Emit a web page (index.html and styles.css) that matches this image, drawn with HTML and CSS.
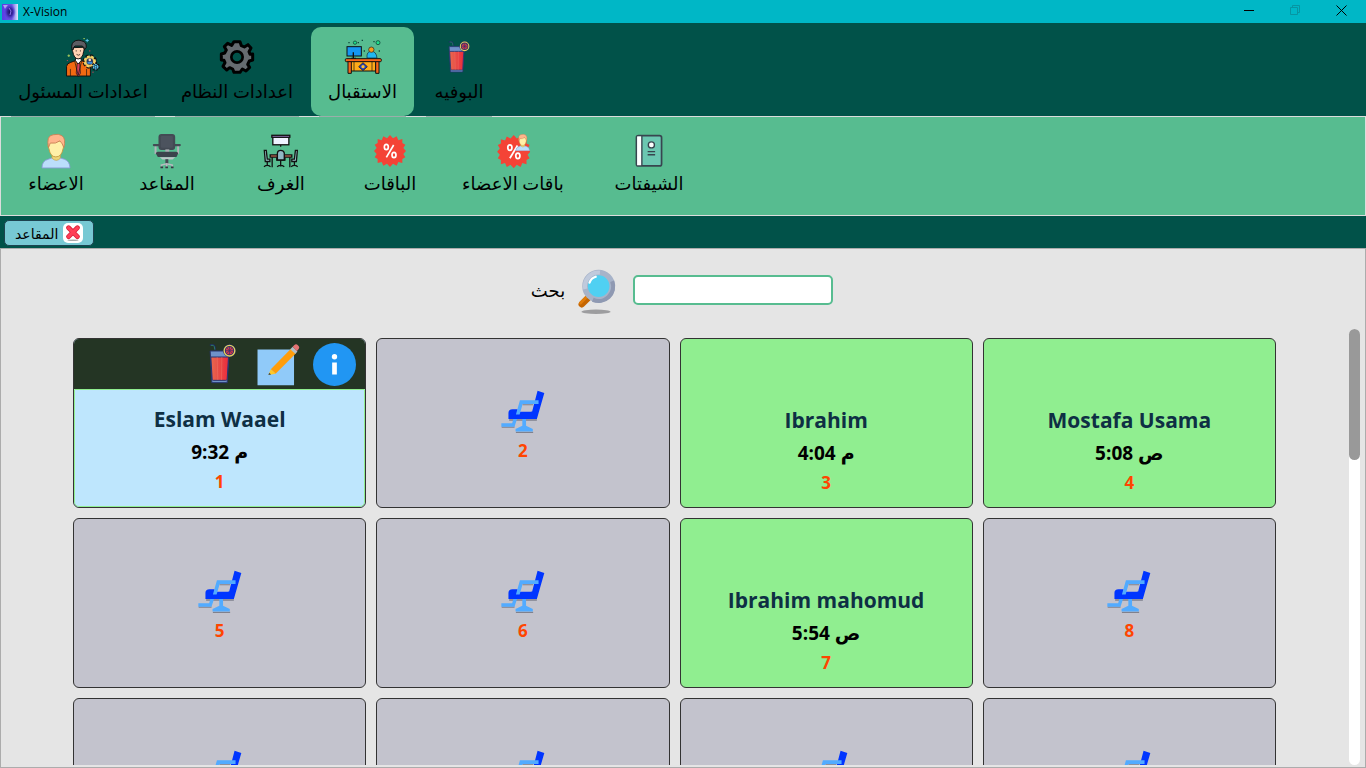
FILE: index.html
```html
<!DOCTYPE html>
<html lang="ar">
<head>
<meta charset="utf-8">
<meta name="viewport" content="width=device-width, initial-scale=1">
<title>X-Vision</title>
<link rel="stylesheet" href="styles.css">
</head>
<body>
<svg class="defs" aria-hidden="true">
  <defs>
    <linearGradient id="juice-fill" x1="0" x2="1"><stop offset="0" stop-color="#e8694f"/><stop offset="1" stop-color="#ea2a3c"/></linearGradient>
    <radialGradient id="logo-fill"><stop offset="0" stop-color="#1a1060"/><stop offset=".5" stop-color="#3a28a8"/><stop offset="1" stop-color="#5a45e0" stop-opacity="0"/></radialGradient>
    <linearGradient id="logo-edge" x1="0" x2="1"><stop offset="0" stop-color="#5a3be8"/><stop offset=".6" stop-color="#6a58e0"/><stop offset="1" stop-color="#dfe8ff"/></linearGradient>
  </defs>
  <symbol id="juice" viewBox="444 60 86 120">
    <path d="M449 63h10q5 1 6 14" fill="none" stroke="#1f2b6b" stroke-width="5"/>
    <path d="M452 64h7q4 1 5 13" fill="none" stroke="#2f8a63" stroke-width="2.5"/>
    <path d="M450 81h57l-6 95h-46z" fill="#6f92c9" stroke="#27346f" stroke-width="3"/>
    <path d="M452 99h53l-4 67q-1 3-4 3h-38q-3 0-3-3z" fill="url(#juice-fill)" stroke="#27346f" stroke-width="3"/>
    <path d="M471 99l2 69M485 99l-1 69" stroke="#f08070" stroke-width="2" opacity=".6"/>
    <circle cx="508" cy="80" r="18" fill="#35306a" stroke="#26305f" stroke-width="3"/>
    <circle cx="508" cy="80" r="16" fill="none" stroke="#e4d25c" stroke-width="4"/>
    <circle cx="508" cy="80" r="11" fill="#d43b4c"/>
    <path d="M508 69v22M497 80h22M500 72l16 16M516 72l-16 16" stroke="#35306a" stroke-width="2"/>
  </symbol>
  <symbol id="manager" viewBox="198 108 108 124">
    <g stroke="#111" stroke-width="3" stroke-linejoin="round">
      <path d="M201 229v-30q1-9 12-12l16-6h18l16 6q12 4 12 13v29z" fill="#f26a12"/>
      <path d="M228 180l9 13 10-13-2-7h-15z" fill="#fff"/>
      <path d="M234 190h8l2 30-5 9h-3l-5-9z" fill="#d8405a" stroke-width="2"/>
      <path d="M226 182l11 44 11-44M213 207v22M263 207v22" fill="none" stroke-width="2"/>
      <path d="M220 141q-4 8 0 12 4 22 17 23 14-1 17-23 4-6 0-13z" fill="#ffd2b3"/>
      <path d="M218 147q-5-22 12-28 10-3 18 1 16 3 14 20l-6 8q1-8-6-12h-23q-6 4-5 11z" fill="#5d5d63"/>
    </g>
    <path d="M231 149v4M244 149v4M232 162q6 5 11 0" fill="none" stroke="#3b2a22" stroke-width="2.5"/>
    <circle cx="273" cy="184" r="18" fill="none" stroke="#111" stroke-width="9" stroke-dasharray="9 5"/>
    <circle cx="273" cy="184" r="16" fill="#e9c25a" stroke="#f3d26c" stroke-width="6" stroke-dasharray="8 5"/>
    <circle cx="273" cy="184" r="10" fill="#213a66"/><path d="M266 191v-6h14v6z" fill="#3c8fe0"/><circle cx="273" cy="179" r="4" fill="#ffd2b3"/>
    <circle cx="291" cy="200" r="9" fill="#111" stroke="#111" stroke-width="8" stroke-dasharray="5 3"/>
    <circle cx="291" cy="200" r="7" fill="#173b55" stroke="#5cc8f0" stroke-width="4" stroke-dasharray="5 2"/>
    <circle cx="291" cy="200" r="3" fill="#5cc8f0"/>
    <path d="M265 114v10M260 119h10" stroke="#5cc8f0" stroke-width="3"/>
    <path d="M208 162v8M204 166h8M253 113h5" stroke="#a4c85a" stroke-width="3"/>
    <path d="M281 217h4M273 149v4M202 181h3" stroke="#d8405a" stroke-width="3"/>
  </symbol>
  <symbol id="gear" viewBox="-52 -60 104 120">
    <path d="M-9-46H9L13-34 22-30 33-37 42-27 36-16 39-8 47-9V9L37 12 32 22 38 31 27 42 16 36 9 46H-9L-13 36-22 32-31 39-42 28-36 17-39 10-47 9V-9L-37-12-32-21-38-31-28-41-16-35z" stroke="#000" stroke-width="9" stroke-linejoin="round" fill="#656b70"/>
    <circle r="17" fill="#015249" stroke="#000" stroke-width="8"/>
  </symbol>
  <symbol id="desk" viewBox="130 58 114 108">
    <path d="M199 115q-2-20 13-20t17 20z" fill="#20b8f0" stroke="#123" stroke-width="2"/>
    <circle cx="212" cy="90" r="8" fill="#f99a18" stroke="#222" stroke-width="2"/>
    <rect x="139" y="81" width="43" height="28" fill="#1597f2" stroke="#111" stroke-width="3"/>
    <path d="M158 98v18M152 116h14" stroke="#111" stroke-width="4"/>
    <rect x="149" y="125" width="76" height="29" fill="#ffab1a" stroke="#111" stroke-width="3"/>
    <path d="M142 124h10v37h-10zM225 124h10v37h-10z" fill="#f7681c" stroke="#111" stroke-width="3"/>
    <rect x="134" y="117" width="108" height="9" rx="3" fill="#f7681c" stroke="#111" stroke-width="3"/>
    <path d="M187 129l13 12-13 12-13-12zM160 126v28M214 126v28" fill="#213fc4" stroke="#111" stroke-width="2"/>
    <circle cx="187" cy="141" r="5" fill="#ffc02a"/>
    <g fill="#1fe08a" stroke="#114b3c" stroke-width="2.5"><circle cx="163" cy="69" r="5"/><circle cx="232" cy="69" r="6"/></g>
    <path d="M143 69h4M171 69h4M183 62h4M189 94h4M218 66h4M234 94h4" stroke="#114b3c" stroke-width="4"/>
  </symbol>
  <symbol id="person" viewBox="126 57 87 104">
    <path d="M129 158q0-21 18-25l13-5h19l15 5q15 5 16 25z" fill="#bbdefb" stroke="#8899d8" stroke-width="2.5"/>
    <path d="M158 118h24v12q-11 12-24 0z" fill="#edd679" stroke="#c6a03e" stroke-width="2"/>
    <path d="M149 85q-6 9 0 17 4 24 20 24 17 0 21-24 5-8 0-18L170 77z" fill="#fff0a8" stroke="#c49a3c" stroke-width="2.5"/>
    <path d="M148 99q-8-35 14-37 16-4 25 3 12 9 5 34-5-16-12-19-11 9-27 6z" fill="#ffb58c" stroke="#c98052" stroke-width="2.5"/>
  </symbol>
  <symbol id="office" viewBox="458 54 90 110">
    <path d="M468 94v21h11M537 94v21h-11" fill="none" stroke="#b0b3b9" stroke-width="6"/>
    <path d="M463 91h17M524 91h18" stroke="#434a54" stroke-width="7" stroke-linecap="round"/>
    <rect x="477" y="57" width="51" height="49" rx="9" fill="#434a54"/><rect x="484" y="63" width="37" height="36" rx="4" fill="#4c535e"/>
    <path d="M498 104h12v9h-12z" fill="#aaaeb4"/>
    <path d="M469 117q0-6 6-6h56q6 0 6 6l-5 10h-57z" fill="#3c424c"/>
    <path d="M481 128h47l-8 7h-31z" fill="#c0c3c8"/><path d="M498 134h9v17h-9z" fill="#434a54"/>
    <path d="M486 157v-5l16-4 17 4v5M502 150v8" fill="none" stroke="#b7babf" stroke-width="5"/>
    <path d="M483 156h8v6h-8zM498 156h8v6h-8zM515 156h8v6h-8z" fill="#343942"/>
  </symbol>
  <symbol id="room" viewBox="781 57 110 104">
    <g stroke="#111" stroke-width="4" fill="none">
      <rect x="811" y="66" width="49" height="24" fill="#eef3ff"/><rect x="808" y="61" width="55" height="6" fill="#b68ce0"/><path d="M835 91v5"/>
      <path d="M803 121h66v7h-66z" fill="#e57c62"/><path d="M809 128v31M863 128v31"/>
      <path d="M785 107h6l3 27h8v7h-14zM886 107h-6l-3 27h-8v7h14z" fill="#9cc8d0"/>
      <path d="M794 141v14M784 157q10-8 20 0M877 141v14M867 157q10-8 20 0"/>
      <path d="M825 137v-22q1-8 10-8t11 8v22z" fill="#91b9c5"/><path d="M823 129v8h25v-8M835 139v17M824 157q11-8 22 0"/>
    </g>
  </symbol>
  <symbol id="badge" viewBox="-48 -48 96 96">
    <path fill="#f44336" d="M0-48L9-38 20-44 25-32 37-36 37-24 46-19 40-9 48 0 40 9 46 19 37 24 37 36 25 33 20 44 9 38 0 48-9 38-20 44-25 33-37 36-37 24-46 19-40 9-48 0-40-9-46-19-37-24-37-36-25-32-20-44-9-38z"/>
    <g fill="none" stroke="#fff" stroke-width="5"><ellipse cx="-11" cy="-12" rx="6" ry="8"/><ellipse cx="12" cy="12" rx="6" ry="8"/><path d="M11-18L-11 19"/></g>
  </symbol>
  <symbol id="member-badge" viewBox="467 56 100 104">
    <use href="#badge" x="471" y="62" width="96" height="96"/>
    <use href="#person" x="523" y="58" width="44" height="51"/>
  </symbol>
  <symbol id="book" viewBox="882 57 90 106">
    <rect x="890" y="65" width="74" height="89" rx="6" fill="#6bc7b1" stroke="#38454f" stroke-width="5"/>
    <path d="M892 67h14v85h-14z" fill="#fff"/><path d="M906 65v89" stroke="#38454f" stroke-width="4"/>
    <circle cx="934" cy="92" r="9" fill="#fff" stroke="#38454f" stroke-width="4"/><path d="M923 112h22M923 121h22" stroke="#38454f" stroke-width="4"/>
  </symbol>
  <symbol id="seat-icon" viewBox="66 45 130 126">
    <path d="M68 154h38M110 170h51M90 133h82" fill="none" stroke="#80818d" stroke-width="4"/>
    <path d="M103 128h11l-8 25H67v-10h32z" fill="#52abff"/>
    <path d="M129 128h11v22l20 10v7h-51v-7l20-10z" fill="#52abff"/>
    <path d="M88 130v-18q0-11 12-11h15v7h43l16-61 20 6-22 77z" fill="#0035ff"/>
    <path d="M124 87h37l-6 21h-36z" fill="#c3c3cd"/>
    <path d="M122 75h55v11h-47l-9 31h-11z" fill="#52abff"/><path d="M130 88h31" stroke="#80818d" stroke-width="3"/>
  </symbol>
  <symbol id="search-icon" viewBox="198 40 120 142">
    <ellipse cx="255" cy="172" rx="45" ry="7" fill="#9d9d9f"/>
    <path d="M211 149l22-22" stroke="#c56500" stroke-width="20" stroke-linecap="round"/><path d="M207 145l22-22" stroke="#e07c0a" stroke-width="9" stroke-linecap="round"/>
    <circle cx="263" cy="93" r="42" fill="#50d0f2" stroke="#a7b3c9" stroke-width="17"/>
    <path d="M305 78a45 45 0 01-60 57" fill="none" stroke="#8f99b2" stroke-width="13"/>
    <path d="M222 102a42 42 0 0145-51" fill="none" stroke="#c0cadc" stroke-width="13"/>
    <path d="M235 82q5-14 19-18" fill="none" stroke="#fff" stroke-width="7" stroke-linecap="round"/>
  </symbol>
  <symbol id="edit" viewBox="594 56 125 126">
    <path fill="#90caf9" d="M595 75h107v105H595z"/>
    <path d="M634 133L693 73l14 14-59 59z" fill="#ff9d0b"/><path d="M634 133l-7 17 21-4z" fill="#ffc928"/><path d="M629 143l-2 7 8-2z" fill="#374750"/>
    <path d="M691 74l7-7 14 14-6 7z" fill="#b0bec5"/><path d="M698 67l5-5q5-5 11 1 6 5 1 11l-5 6z" fill="#e57373"/>
  </symbol>
  <symbol id="info" viewBox="0 0 128 128"><circle cx="64" cy="64" r="64" fill="#2196f3"/><circle cx="64" cy="41" r="8" fill="#fff"/><path d="M57 58h14v36H57z" fill="#fff"/></symbol>
  <symbol id="cross" viewBox="0 0 40 40"><ellipse cx="20" cy="38" rx="14" ry="2" fill="#aaa"/><path d="M9 7l22 22M31 7L9 29" stroke="#d9203a" stroke-width="12" stroke-linecap="round"/><path d="M9 7l22 22M31 7L9 29" stroke="#ff3e56" stroke-width="8" stroke-linecap="round"/></symbol>
</svg>

<div class="window">
  <header class="titlebar">
    <svg class="logo" viewBox="0 0 16 16" aria-hidden="true"><path fill="url(#logo-edge)" d="M0 0h16v16H0z"/><path d="M1 1h5L3 5z" fill="#fff" opacity=".5"/><ellipse cx="8" cy="8" rx="6" ry="8" fill="url(#logo-fill)"/><path d="M7 4l2 3-1 4" stroke="#8a74f0" fill="none"/></svg>
    <h1 class="app-name">X-Vision</h1>
    <div class="window-controls">
      <button class="win-btn" type="button" aria-label="Minimize"><svg viewBox="0 0 11 11"><path d="M0 5.500h10" stroke="#000"/></svg></button>
      <button class="win-btn" type="button" aria-label="Restore" disabled><svg viewBox="0 0 11 11"><path d="M.5 2.500h7v7h-7zM2.500 2.500v-2h7v7h-2" stroke="#0795a2" fill="none"/></svg></button>
      <button class="win-btn" type="button" aria-label="Close"><svg viewBox="0 0 11 11"><path d="M.5.500l10 10M10.500.500l-10 10" stroke="#000"/></svg></button>
    </div>
  </header>

  <nav class="sections">
    <button class="section section-manager" type="button"><svg class="icon-lg"><use href="#manager"/></svg><span>اعدادات المسئول</span></button>
    <button class="section section-system" type="button"><svg class="icon-lg"><use href="#gear"/></svg><span>اعدادات النظام</span></button>
    <button class="section section-reception active" type="button"><svg class="icon-lg"><use href="#desk"/></svg><span>الاستقبال</span></button>
    <button class="section section-buffet" type="button"><svg class="icon-lg icon-short"><use href="#juice"/></svg><span>البوفيه</span></button>
  </nav>

  <nav class="ribbon">
    <button class="tool tool-members" type="button"><svg class="icon-md"><use href="#person"/></svg><span>الاعضاء</span></button>
    <button class="tool tool-seats" type="button"><svg class="icon-md"><use href="#office"/></svg><span>المقاعد</span></button>
    <button class="tool tool-rooms" type="button"><svg class="icon-md"><use href="#room"/></svg><span>الغرف</span></button>
    <button class="tool tool-offers" type="button"><svg class="icon-md"><use href="#badge"/></svg><span>الباقات</span></button>
    <button class="tool tool-member-offers" type="button"><svg class="icon-md"><use href="#member-badge"/></svg><span>باقات الاعضاء</span></button>
    <button class="tool tool-shifts" type="button"><svg class="icon-md"><use href="#book"/></svg><span>الشيفتات</span></button>
  </nav>

  <div class="open-tabs">
    <div class="open-tab"><span>المقاعد</span><button class="tab-close" type="button" aria-label="اغلاق"><svg><use href="#cross"/></svg></button></div>
  </div>

  <main class="content">
    <form class="search">
      <label for="q">بحث</label>
      <svg class="search-glyph" aria-hidden="true"><use href="#search-icon"/></svg>
      <input id="q" type="text">
    </form>
    <div class="scroller">
      <div class="seats">
        <article class="seat current">
          <div class="actions">
            <button class="action" type="button" aria-label="البوفيه"><svg class="action-juice"><use href="#juice"/></svg></button>
            <button class="action" type="button" aria-label="تعديل"><svg><use href="#edit"/></svg></button>
            <button class="action" type="button" aria-label="معلومات"><svg><use href="#info"/></svg></button>
          </div>
          <div class="seat-body"><h2 class="guest">Eslam Waael</h2><p class="time">9:32 م</p><p class="number">1</p></div>
        </article>
        <article class="seat free"><svg class="chair"><use href="#seat-icon"/></svg><p class="number">2</p></article>
        <article class="seat busy"><div class="seat-body"><h2 class="guest">Ibrahim</h2><p class="time">4:04 م</p><p class="number">3</p></div></article>
        <article class="seat busy"><div class="seat-body"><h2 class="guest">Mostafa Usama</h2><p class="time">5:08 ص</p><p class="number">4</p></div></article>
        <article class="seat free"><svg class="chair"><use href="#seat-icon"/></svg><p class="number">5</p></article>
        <article class="seat free"><svg class="chair"><use href="#seat-icon"/></svg><p class="number">6</p></article>
        <article class="seat busy"><div class="seat-body"><h2 class="guest">Ibrahim mahomud</h2><p class="time">5:54 ص</p><p class="number">7</p></div></article>
        <article class="seat free"><svg class="chair"><use href="#seat-icon"/></svg><p class="number">8</p></article>
        <article class="seat free"><svg class="chair"><use href="#seat-icon"/></svg></article>
        <article class="seat free"><svg class="chair"><use href="#seat-icon"/></svg></article>
        <article class="seat free"><svg class="chair"><use href="#seat-icon"/></svg></article>
        <article class="seat free"><svg class="chair"><use href="#seat-icon"/></svg></article>
      </div>
      <div class="track"><div class="thumb"></div></div>
    </div>
  </main>
</div>
</body>
</html>
```

FILE: styles.css
```css
:root {
  --deep: #015249;
  --mint: #57bc90;
  --sky: #77c9d4;
}

* { box-sizing: border-box; }

body {
  margin: 0;
  font-family: "Open Sans", "DejaVu Sans", sans-serif;
  color: #000;
  background: #e5e5e5;
}

button {
  margin: 0;
  padding: 0;
  border: 0;
  background: none;
  font: inherit;
  color: inherit;
}

h1, h2, p { margin: 0; }

svg { display: block; }

.defs {
  position: absolute;
  width: 0;
  height: 0;
}

.window {
  display: flex;
  flex-direction: column;
  height: 100vh;
  overflow: hidden;
}

/* Title bar */
.titlebar {
  display: flex;
  flex: none;
  align-items: center;
  height: 23px;
  padding: 0 2px;
  background: #00b7c6;
}

.logo { width: 16px; height: 16px; }

.app-name {
  margin-left: 5px;
  font-size: 12px;
  line-height: 16px;
  font-weight: 400;
}

.window-controls {
  display: flex;
  height: 100%;
  margin-left: auto;
}

.win-btn {
  display: flex;
  align-items: center;
  justify-content: center;
  width: 46px;
  padding-bottom: 2px;
}

.win-btn svg { width: 11px; height: 11px; }

/* Section buttons */
.sections {
  display: flex;
  flex: none;
  gap: 4px;
  padding: 4px 3px 0;
  background: var(--deep);
}

.section {
  position: relative;
  display: flex;
  flex-direction: column;
  align-items: center;
  gap: 2px;
  height: 89px;
  padding-top: 10px;
  border-radius: 10px;
  font-size: 18px;
  line-height: 24px;
  white-space: nowrap;
}

.section::after {
  content: "";
  position: absolute;
  right: 8px;
  bottom: -1px;
  left: 8px;
  height: 1px;
  background: #9aaeaa;
}

.section-manager { width: 160px; }
.section-system { width: 140px; }
.section-reception { width: 103px; }
.section-buffet { width: 82px; }

.section.active { background: var(--mint); }

.icon-lg { width: 38px; height: 40px; }
.icon-short { height: 32px; margin: 4px 0; }

/* Ribbon */
.ribbon {
  display: flex;
  flex: none;
  height: 100px;
  padding-top: 16px;
  border: 1px solid #dcdcdc;
  background: var(--mint);
}

.tool {
  display: flex;
  flex-direction: column;
  align-items: center;
  gap: 2px;
  font-size: 18px;
  line-height: 24px;
  white-space: nowrap;
}

.tool-members { width: 110px; }
.tool-seats { width: 112px; }
.tool-rooms { width: 116px; }
.tool-offers { width: 102px; }
.tool-member-offers { width: 144px; }
.tool-shifts { width: 128px; }

.icon-md { width: 36px; height: 36px; }
.tool-offers .icon-md { width: 32px; }

/* Open tabs */
.open-tabs {
  display: flex;
  flex: none;
  align-items: center;
  height: 32px;
  padding: 2px 4px 0;
  background: var(--deep);
}

.open-tab {
  display: flex;
  align-items: center;
  gap: 5px;
  height: 26px;
  padding: 0 10px;
  border: 1px solid #1d4450;
  border-radius: 5px;
  background: var(--sky);
  font-size: 14px;
}

.tab-close {
  width: 20px;
  height: 20px;
  padding: 2px;
  border-radius: 5px;
  background: #fff;
}

.tab-close svg { width: 16px; height: 16px; }

/* Content */
.content {
  display: flex;
  flex: 1;
  flex-direction: column;
  min-height: 0;
  padding-bottom: 2px;
  border: 1px solid #acacac;
}

.search {
  display: flex;
  flex: none;
  align-items: center;
  justify-content: center;
  height: 80px;
  padding: 2px 2px 0 0;
}

.search label {
  font-size: 18px;
  line-height: 24px;
}

.search-glyph {
  width: 40px;
  height: 46px;
  margin: 4px 16px 0 12px;
}

.search input {
  width: 200px;
  height: 30px;
  padding: 0 8px;
  border: 2px solid var(--mint);
  border-radius: 5px;
  background: #fff;
  font: inherit;
}

.scroller {
  display: flex;
  flex: 1;
  min-height: 0;
  padding-right: 5px;
}

.seats {
  display: grid;
  flex: 1;
  grid-template-columns: repeat(4, 1fr);
  grid-auto-rows: 170px;
  gap: 10px;
  padding: 9px 73px 0 72px;
  overflow: hidden;
}

.seat {
  display: flex;
  flex-direction: column;
  overflow: hidden;
  border: 1px solid #333;
  border-radius: 6px;
  text-align: center;
}

.free {
  align-items: center;
  padding-top: 51px;
  background: #c3c3cd;
}

.busy { background: #90ee90; }
.current { background: #bee6fd; }

.chair { width: 44px; height: 43px; }
.free .number { margin-top: 5px; }

.seat-body { margin-top: auto; padding-bottom: 11px; }

.current .seat-body {
  flex: 1;
  padding-top: 13px;
  border: 1px solid #90ee90;
  border-radius: 0 0 5px 5px;
}

.guest {
  font-size: 21px;
  line-height: 32px;
  font-weight: 700;
  color: #0e2f44;
}

.time {
  font-size: 19px;
  line-height: 34px;
  font-weight: 700;
}

.number {
  font-size: 17px;
  line-height: 26px;
  font-weight: 700;
  color: #ff4500;
}

.actions {
  display: flex;
  align-items: center;
  justify-content: flex-end;
  gap: 13px;
  height: 51px;
  padding-right: 9px;
  background: #243524;
}

.action svg { width: 43px; height: 43px; }
.action .action-juice { height: 40px; }

.track {
  width: 11px;
  border-radius: 6px;
  background: #fff;
}

.thumb {
  height: 30%;
  border-radius: 6px;
  background: #999;
}
```
